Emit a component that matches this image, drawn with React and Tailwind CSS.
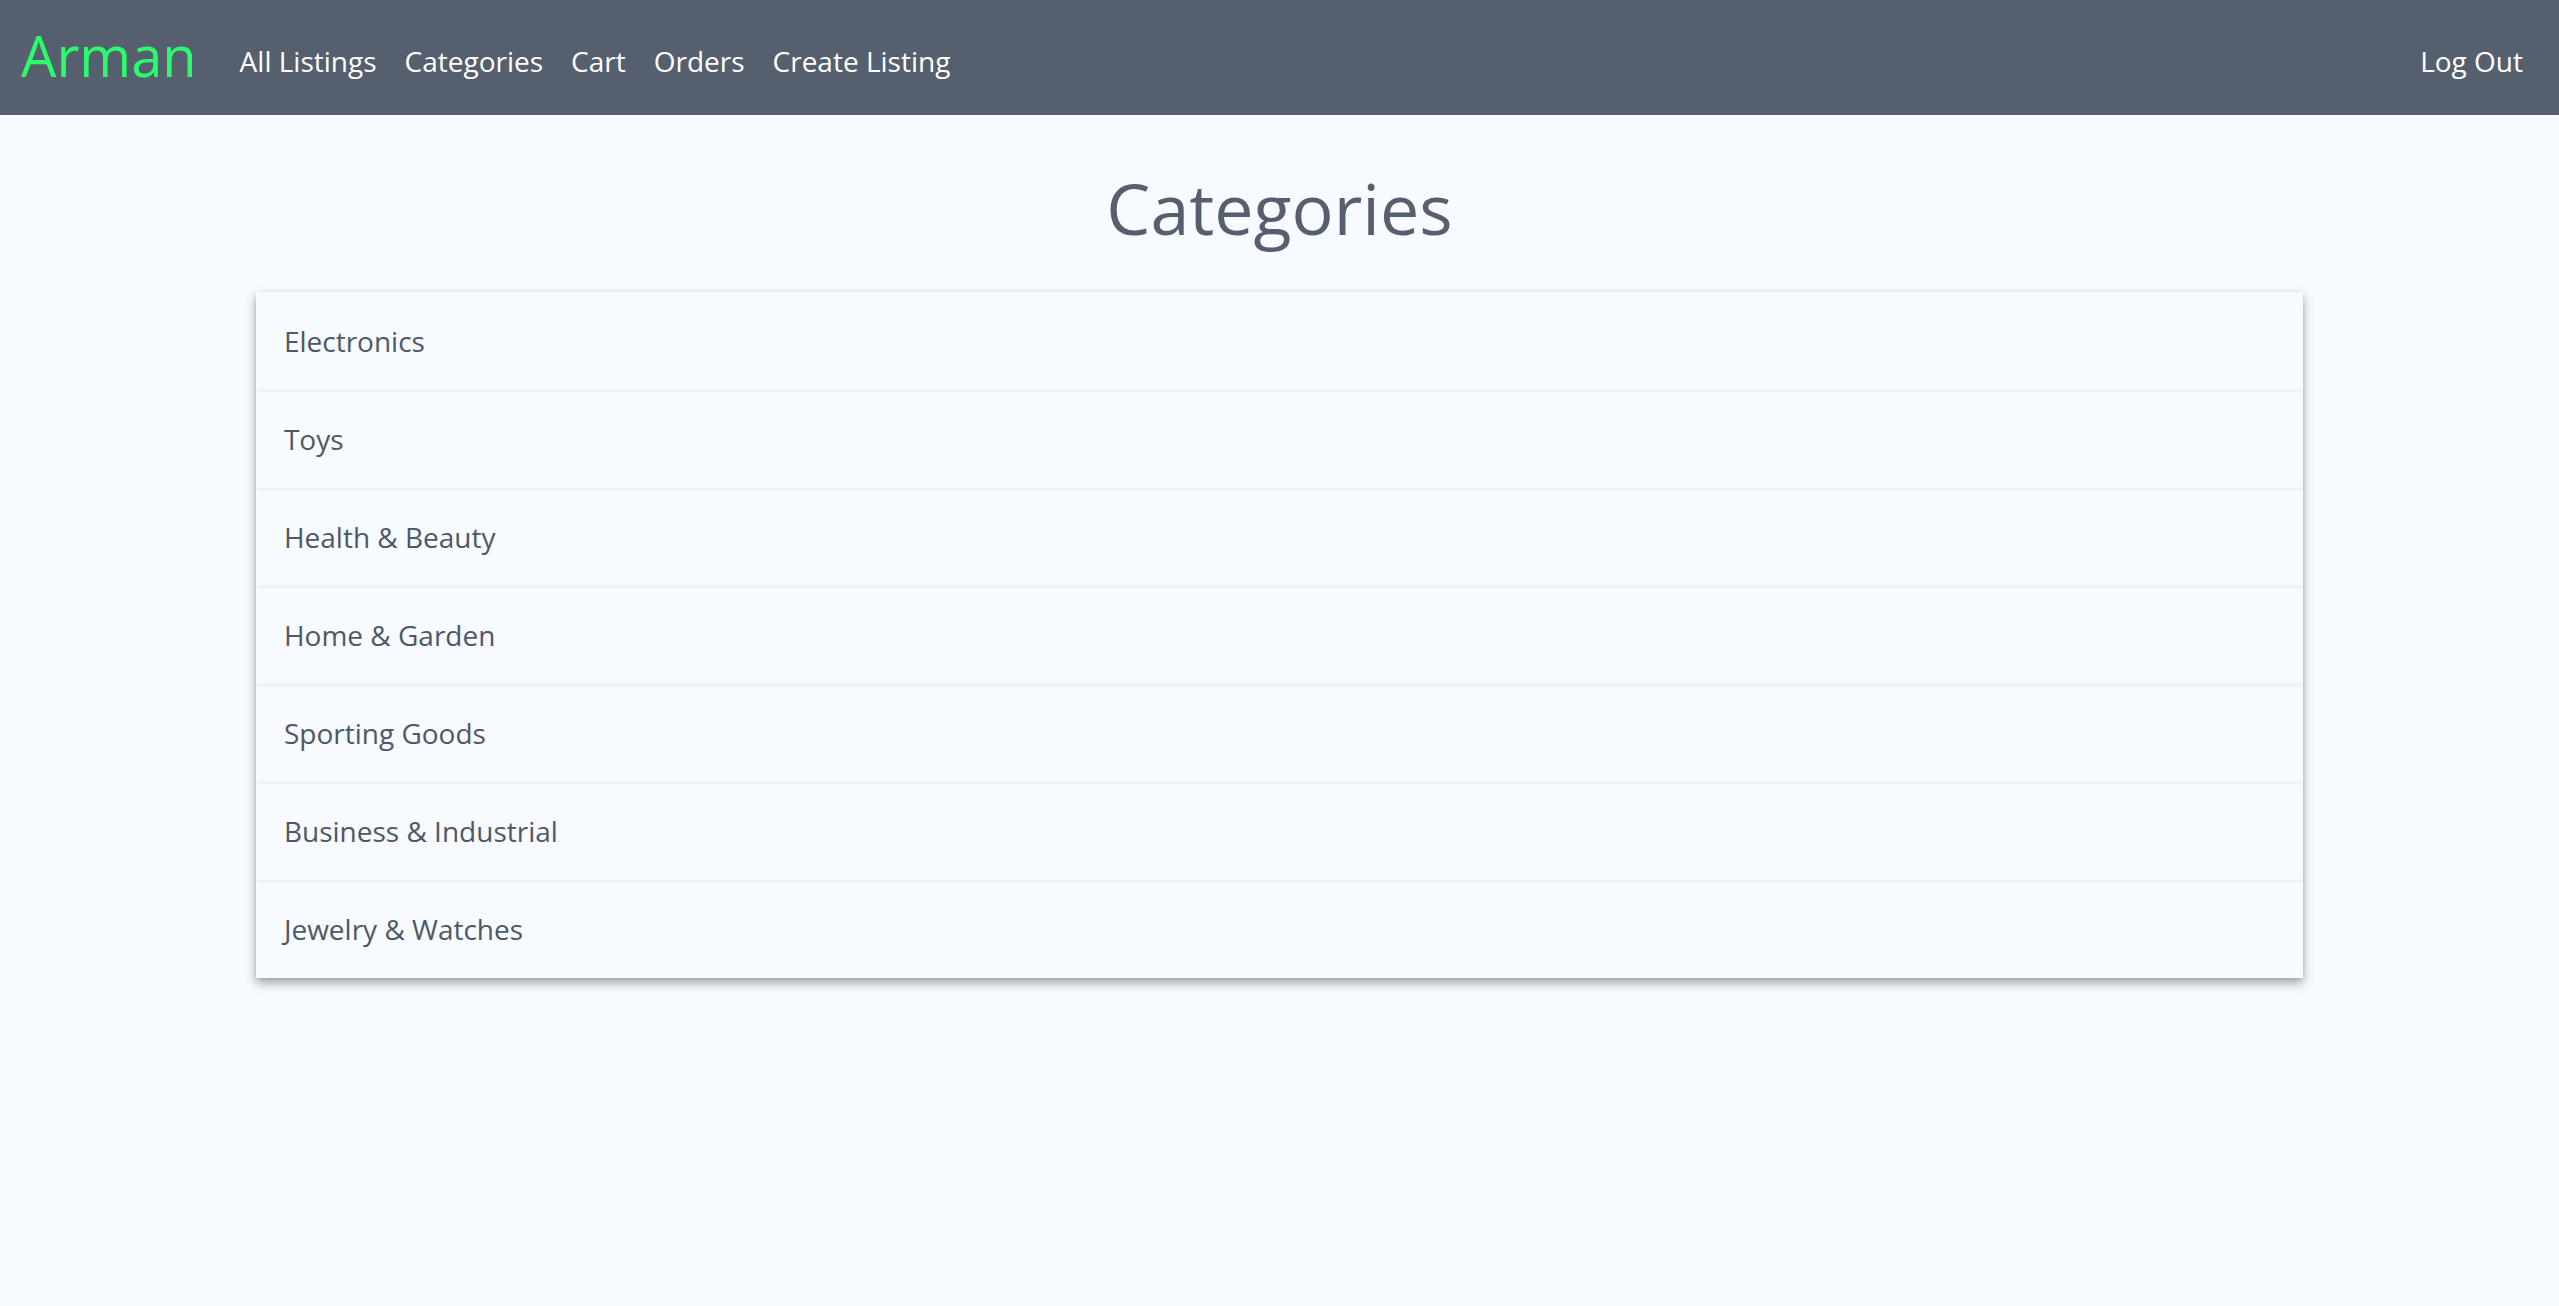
const links = ["All Listings", "Categories", "Cart", "Orders", "Create Listing"];

const categories = [
    "Electronics",
    "Toys",
    "Health & Beauty",
    "Home & Garden",
    "Sporting Goods",
    "Business & Industrial",
    "Jewelry & Watches",
];

export default function App(){
    return (
        <div className="min-h-screen w-full bg-[#f7faff] font-['Open_Sans',sans-serif]">
            <nav className="h-[115px] w-full bg-[#555f6e] flex flex-row items-center pl-[21px] pr-[36px]">
                <div className="text-[56px] leading-none text-[#2bfc6b] pb-[6px]">Arman</div>
                <div className="flex flex-row items-center gap-[28px] ml-[43px] pt-[6px]">
                {
                    links.map((l, i) => <a key={i} className="text-[28px] text-white leading-none cursor-pointer">{l}</a>)
                }
                </div>
                <div className="flex-grow"></div>
                <a className="text-[28px] text-white leading-none pt-[6px] cursor-pointer">Log Out</a>
            </nav>

            <h1 className="text-center text-[70px] leading-none text-[#555f6e] pt-[58px] pb-[49px]">Categories</h1>

            <div className="w-4/5 mx-auto flex flex-col shadow-[0_5px_10px_rgba(0,0,0,0.35)]">
            {
                categories.map((c, i) => <Category key={i} name={c} />)
            }
            </div>
        </div>
    );
}

const Category = ({ name }) => {
    return (
        <div className="h-[98px] flex items-center px-[28px] shadow-[0_1px_4px_rgba(0,0,0,0.08)] text-[28px] text-[#4f5866] cursor-pointer">
            {name}
        </div>
    );
}
